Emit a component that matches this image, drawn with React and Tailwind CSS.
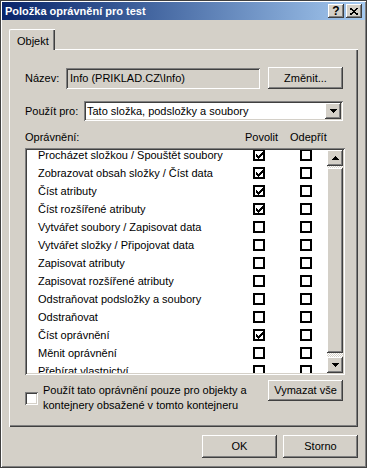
const raised =
  "shadow-[inset_-1px_-1px_#404040,inset_1px_1px_#ffffff,inset_-2px_-2px_#808080,inset_2px_2px_#d4d0c8]";
const sunken =
  "shadow-[inset_1px_1px_#808080,inset_-1px_-1px_#ffffff,inset_2px_2px_#404040,inset_-2px_-2px_#d4d0c8]";

const rows = [
  ["Procházet složkou / Spouštět soubory", true],
  ["Zobrazovat obsah složky / Číst data", true],
  ["Číst atributy", true],
  ["Číst rozšířené atributy", true],
  ["Vytvářet soubory / Zapisovat data", false],
  ["Vytvářet složky / Připojovat data", false],
  ["Zapisovat atributy", false],
  ["Zapisovat rozšířené atributy", false],
  ["Odstraňovat podsložky a soubory", false],
  ["Odstraňovat", false],
  ["Číst oprávnění", true],
  ["Měnit oprávnění", false],
  ["Přebírat vlastnictví", false],
];

const Check = () => (
  <svg width="7" height="7" viewBox="0 0 7 7" shapeRendering="crispEdges">
    <path d="M0 2 L2 4 L6 0 L7 0 L7 3 L2 7 L0 5 Z" fill="#000" />
  </svg>
);

const FlatBox = ({ checked }) => (
  <div className="w-[12px] h-[12px] border-2 border-black bg-white flex items-center justify-center">
    {checked && <Check />}
  </div>
);

const Arrow = ({ down }) => (
  <svg width="7" height="4" viewBox="0 0 7 4" shapeRendering="crispEdges">
    {down ? <path d="M0 0 H7 L3.5 4 Z" fill="#000" /> : <path d="M0 4 H7 L3.5 0 Z" fill="#000" />}
  </svg>
);

const Button = ({ children, className = "" }) => (
  <div className={`bg-[#d4d0c8] ${raised} flex items-center justify-center ${className}`}>{children}</div>
);

export default function App() {
  return (
    <div className="w-[367px] h-[468px] bg-[#d4d0c8] p-[2px] flex flex-col text-[11px] text-black font-['Liberation_Sans',Arial,sans-serif] shadow-[inset_1px_1px_#404040,inset_-1px_-1px_#404040,inset_2px_2px_#ffffff,inset_-2px_-2px_#808080]">
      {/* title bar */}
      <div className="h-[18px] flex items-center bg-gradient-to-r from-[#0a246a] to-[#a6caf0] pl-[3px] pr-[3px]">
        <span className="flex-1 font-bold text-white">Položka oprávnění pro test</span>
        <Button className="w-[16px] h-[14px] font-bold text-[12px] leading-none">?</Button>
        <Button className="w-[16px] h-[14px] ml-[2px]">
          <svg width="8" height="7" viewBox="0 0 8 7" shapeRendering="crispEdges">
            <path d="M0 0 L8 7 M8 0 L0 7" stroke="#000" strokeWidth="1.6" />
          </svg>
        </Button>
      </div>

      <div className="px-[7px] pt-[9px] flex flex-col">
        {/* tab */}
        <div className="relative z-10 -mb-[1px] w-[46px] h-[21px] bg-[#d4d0c8] rounded-tl-[2px] border-t border-l border-white shadow-[inset_-1px_0_#404040,inset_-2px_0_#808080] pl-[7px] pt-[3px]">
          Objekt
        </div>

        {/* panel */}
        <div className="h-[378px] pl-[16px] pr-[13px] flex flex-col shadow-[inset_1px_1px_#ffffff,inset_-1px_-1px_#404040,inset_-2px_-2px_#808080]">
          <div className="mt-[18px] h-[22px] flex items-center">
            <span className="w-[41px]">Název:</span>
            <div className={`w-[194px] h-[21px] ${sunken} pl-[4px] flex items-center`}>Info (PRIKLAD.CZ\Info)</div>
            <Button className="w-[75px] h-[22px] ml-[8px]">Změnit...</Button>
          </div>

          <div className="mt-[12px] h-[20px] flex items-center">
            <span className="w-[59px]">Použít pro:</span>
            <div className={`w-[259px] h-[20px] ${sunken} bg-white p-[2px] flex items-center`}>
              <span className="flex-1 pl-[1px]">Tato složka, podsložky a soubory</span>
              <Button className="w-[16px] h-[16px]">
                <Arrow down />
              </Button>
            </div>
          </div>

          <div className="mt-[9px] h-[14px] flex items-center">
            <span className="w-[220px]">Oprávnění:</span>
            <span className="w-[45px]">Povolit</span>
            <span>Odepřít</span>
          </div>

          <div className={`mt-[4px] w-[320px] h-[227px] ${sunken} bg-white p-[2px] flex`}>
            <div className="flex-1 overflow-hidden">
              <div className="-mt-[4px]">
                {rows.map(([name, allow]) => (
                  <div key={name} className="h-[18px] flex items-center">
                    <span className="w-[226px] pl-[11px] whitespace-nowrap">{name}</span>
                    <FlatBox checked={allow} />
                    <div className="w-[35px]" />
                    <FlatBox checked={false} />
                  </div>
                ))}
              </div>
            </div>
            <div className="w-[16px] flex flex-col">
              <Button className="h-[16px]">
                <Arrow />
              </Button>
              <div className="h-[2px] bg-[repeating-conic-gradient(#ffffff_0_25%,#d4d0c8_0_50%)] bg-[length:2px_2px]" />
              <Button className="flex-1" />
              <div className="h-[4px] bg-[repeating-conic-gradient(#ffffff_0_25%,#d4d0c8_0_50%)] bg-[length:2px_2px]" />
              <Button className="h-[16px]">
                <Arrow down />
              </Button>
            </div>
          </div>

          <div className="mt-[5px] flex">
            <div className="w-[243px] flex items-center">
              <div className={`w-[13px] h-[13px] bg-white ${sunken} mt-[4px]`} />
              <div className="ml-[5px] mt-[3px] leading-[15px]">
                Použít tato oprávnění pouze pro objekty a
                <br />
                kontejnery obsažené v tomto kontejneru
              </div>
            </div>
            <Button className="w-[75px] h-[21px]">Vymazat vše</Button>
          </div>
        </div>

        {/* dialog buttons */}
        <div className="mt-[8px] flex justify-end gap-[6px]">
          <Button className="w-[75px] h-[23px]">OK</Button>
          <Button className="w-[75px] h-[23px]">Storno</Button>
        </div>
      </div>
    </div>
  );
}
